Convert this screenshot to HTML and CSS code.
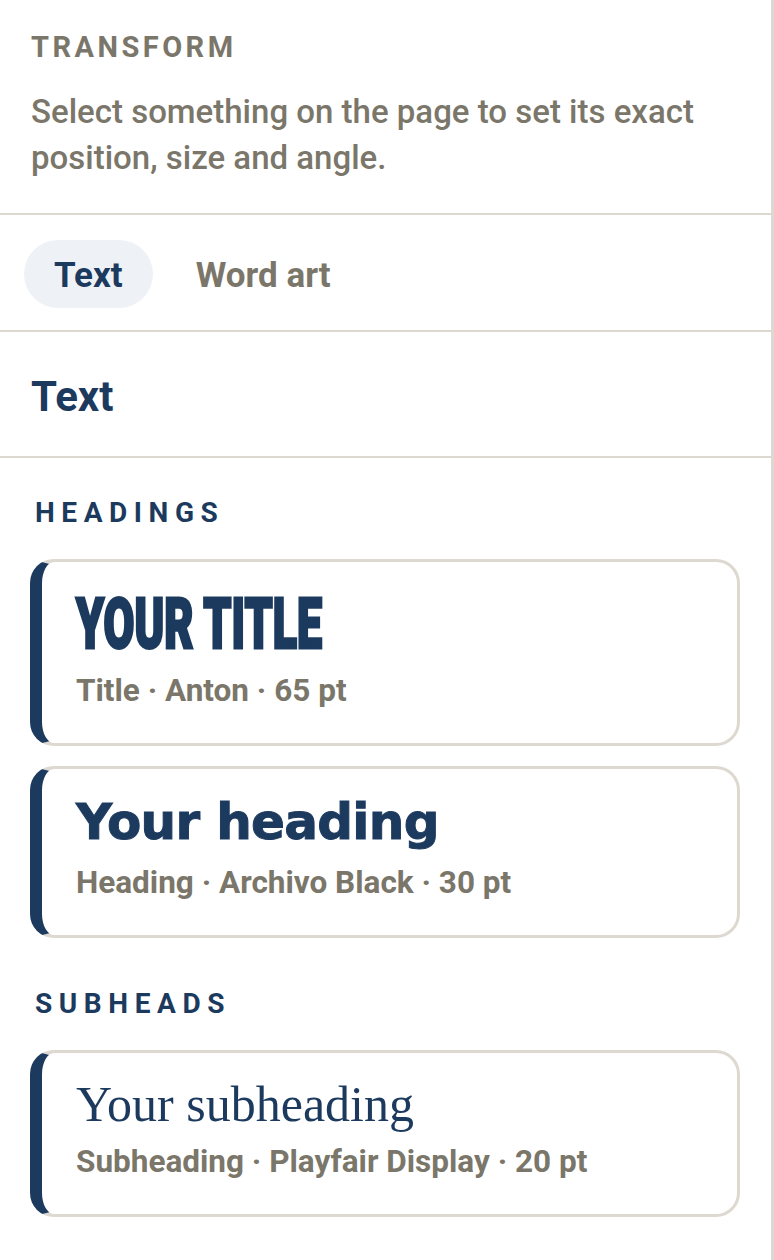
FILE: index.html
```html
<!DOCTYPE html>
<html lang="en">
<head>
<meta charset="utf-8">
<title>Transform panel</title>
<link rel="stylesheet" href="styles.css">
</head>
<body>
<div class="panel">
  <section class="sec sec-transform">
    <h2 class="eyebrow">TRANSFORM</h2>
    <p class="hint">Select something on the page to set its exact position, size and angle.</p>
  </section>
  <nav class="sec tabs">
    <button class="tab is-active">Text</button>
    <button class="tab">Word art</button>
  </nav>
  <section class="sec sec-title">
    <h1 class="title">Text</h1>
  </section>
  <section class="styles">
    <div class="group">
      <h3 class="group-label">HEADINGS</h3>
      <div class="cards">
        <div class="card card-1">
          <div class="sample"><span class="sample-title">YOUR TITLE</span></div>
          <div class="meta">Title · Anton · 65 pt</div>
        </div>
        <div class="card card-2">
          <div class="sample sample-heading">Your heading</div>
          <div class="meta">Heading · Archivo Black · 30 pt</div>
        </div>
      </div>
    </div>
    <div class="group">
      <h3 class="group-label">SUBHEADS</h3>
      <div class="cards">
        <div class="card card-3">
          <div class="sample sample-sub">Your subheading</div>
          <div class="meta">Subheading · Playfair Display · 20 pt</div>
        </div>
      </div>
    </div>
  </section>
</div>
</body>
</html>
```

FILE: styles.css
```css
html, body {
  margin: 0;
  padding: 0;
  background: #ffffff;
}
body {
  font-family: Roboto, "Liberation Sans", sans-serif;
  color: #7b766a;
}
.panel {
  width: 771px;
  min-height: 1260px;
  border-right: 3px solid #ddd9d0;
}
.sec {
  border-bottom: 2px solid #ddd9d0;
}
.sec-transform {
  padding: 31px 31px 32px;
}
.eyebrow {
  margin: 0;
  font-size: 29px;
  line-height: 32px;
  font-weight: 700;
  letter-spacing: 0.12em;
  color: #7b766a;
}
.hint {
  margin: 26px 0 0;
  font-size: 33px;
  line-height: 46px;
  font-weight: 500;
  color: #7b766a;
}
.tabs {
  display: flex;
  gap: 13px;
  padding: 25px 24px 22px;
}
.tab {
  font-family: Roboto, "Liberation Sans", sans-serif;
  font-size: 35px;
  line-height: 40px;
  font-weight: 700;
  padding: 16px 30px 12px;
  border: 0;
  border-radius: 999px;
  background: transparent;
  color: #7b766a;
}
.tab.is-active {
  background: #eef2f6;
  color: #1c3a5e;
}
.sec-title {
  padding: 40px 31px 34px;
}
.title {
  margin: 0;
  font-size: 42px;
  line-height: 50px;
  font-weight: 700;
  color: #1c3a5e;
}
.styles {
  padding: 39px 31px 0 30px;
}
.group + .group {
  margin-top: 50px;
}
.group-label {
  margin: 0 0 30px;
  padding-left: 5px;
  font-size: 28px;
  line-height: 32px;
  font-weight: 700;
  letter-spacing: 0.235em;
  color: #1c3a5e;
}
.cards {
  display: flex;
  flex-direction: column;
  gap: 20px;
}
.card {
  border: 3px solid #ddd9d0;
  border-left: 12px solid #1c3a5e;
  border-radius: 24px;
  padding: 28px 34px 34px;
  display: flex;
  flex-direction: column;
}
.sample {
  color: #1c3a5e;
}
.card-1 .sample {
  height: 69px;
  line-height: 69px;
}
.sample-title {
  display: inline-block;
  font-family: Roboto, "Liberation Sans", sans-serif;
  font-size: 70px;
  font-weight: 900;
  -webkit-text-stroke: 3px #1c3a5e;
  transform: scaleX(0.64);
  transform-origin: left center;
  white-space: nowrap;
}
.card-1 .meta { margin-top: 14px; }
.sample-heading {
  font-family: "DejaVu Sans", sans-serif;
  font-size: 50px;
  line-height: 51px;
  font-weight: 700;
  letter-spacing: -0.7px;
  -webkit-text-stroke: 1px #1c3a5e;
}
.card-2 .meta { margin-top: 17px; }
.sample-sub {
  font-family: "Liberation Serif", serif;
  font-size: 50px;
  line-height: 47px;
  font-weight: 400;
}
.card-3 .meta { margin-top: 16px; }
.meta {
  font-size: 31.5px;
  line-height: 36px;
  font-weight: 700;
  color: #7b766a;
}
```
